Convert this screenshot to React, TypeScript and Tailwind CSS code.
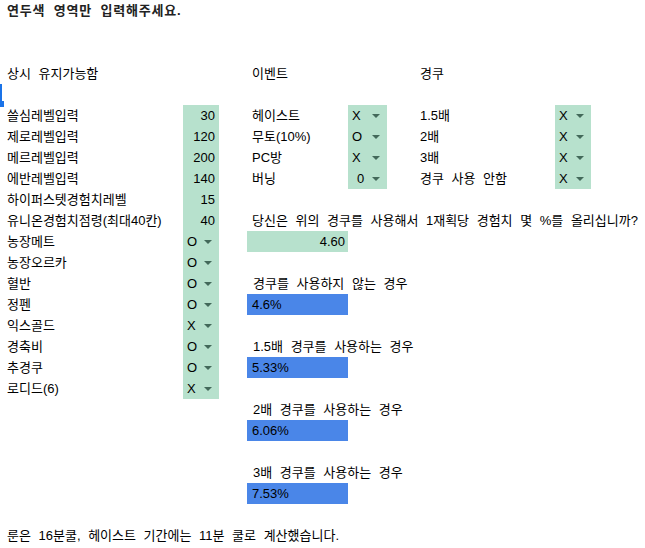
import type { ReactNode } from 'react';

const COLS = 'grid grid-cols-[183px_36px_28px_101px_39px_29px_139px_36px_1fr] h-[21px]';

const leftRows: [string, string, 'num' | 'dd'][] = [
  ['쓸심레벨입력', '30', 'num'],
  ['제로레벨입력', '120', 'num'],
  ['메르레벨입력', '200', 'num'],
  ['에반레벨입력', '140', 'num'],
  ['하이퍼스텟경험치레벨', '15', 'num'],
  ['유니온경험치점령(최대40칸)', '40', 'num'],
  ['농장메트', 'O', 'dd'],
  ['농장오르카', 'O', 'dd'],
  ['혈반', 'O', 'dd'],
  ['정펜', 'O', 'dd'],
  ['익스골드', 'X', 'dd'],
  ['경축비', 'O', 'dd'],
  ['추경쿠', 'O', 'dd'],
  ['로디드(6)', 'X', 'dd'],
];

const events: [string, string][] = [
  ['헤이스트', 'X'],
  ['무토(10%)', 'O'],
  ['PC방', 'X'],
  ['버닝', '0'],
];

const coupons = ['1.5배', '2배', '3배', '경쿠 사용 안함'];

const results: [string, string][] = [
  ['경쿠를 사용하지 않는 경우', '4.6%'],
  ['1.5배 경쿠를 사용하는 경우', '5.33%'],
  ['2배 경쿠를 사용하는 경우', '6.06%'],
  ['3배 경쿠를 사용하는 경우', '7.53%'],
];

function Row({ children }: { children?: ReactNode }) {
  return <div className={COLS}>{children}</div>;
}

function Text({ children, className = '' }: { children?: ReactNode; className?: string }) {
  return <div className={`flex items-center whitespace-nowrap ${className}`}>{children}</div>;
}

function Drop({ v, pad = 'pl-[4px]' }: { v: string; pad?: string }) {
  return (
    <div className={`flex items-center justify-between bg-[#b7e1cd] pr-[7px] ${pad}`}>
      <span>{v}</span>
      <span className="h-0 w-0 border-x-[4px] border-t-[4px] border-x-transparent border-t-[#43695a]" />
    </div>
  );
}

function Empty() {
  return <div />;
}

export default function App() {
  const rows: ReactNode[] = [];

  rows.push(
    <Row key="title">
      <Text className="col-span-9 pl-[7px] font-bold tracking-[0.8px] text-[#222]">연두색 영역만 입력해주세요.</Text>
    </Row>
  );
  rows.push(<Row key="e1" />, <Row key="e2" />);
  rows.push(
    <Row key="head">
      <Text className="pl-[7px]">상시 유지가능함</Text>
      <Empty />
      <Empty />
      <Text className="pl-[5px]">이벤트</Text>
      <Empty />
      <Empty />
      <Text className="pl-[4px]">경쿠</Text>
    </Row>
  );
  rows.push(<Row key="e4" />);

  leftRows.forEach(([label, value, type], i) => {
    const idx = i + 5;
    rows.push(
      <Row key={label}>
        <Text className="pl-[7px]">{label}</Text>
        {type === 'num' ? (
          <Text className="justify-end bg-[#b7e1cd] pr-[4px]">{value}</Text>
        ) : (
          <Drop v={value} />
        )}
        <Empty />
        {i < 4 && (
          <>
            <Text className="pl-[5px]">{events[i][0]}</Text>
            <Drop v={events[i][1]} pad={events[i][1] === '0' ? 'pl-[9px]' : 'pl-[4px]'} />
            <Empty />
            <Text className="pl-[4px]">{coupons[i]}</Text>
            <Drop v="X" />
          </>
        )}
        {idx === 10 && (
          <Text className="col-span-6 pl-[5px]">당신은 위의 경쿠를 사용해서 1재획당 경험치 몇 %를 올리십니까?</Text>
        )}
        {idx === 11 && <Text className="justify-end bg-[#b7e1cd] pr-[3px]">4.60</Text>}
        {[13, 16].includes(idx) && (
          <Text className="col-span-6 pl-[6px]">{results[(idx - 13) / 3][0]}</Text>
        )}
        {[14, 17].includes(idx) && (
          <Text className="bg-[#4a86e8] pl-[5px]">{results[(idx - 14) / 3][1]}</Text>
        )}
      </Row>
    );
  });

  for (let idx = 19; idx <= 24; idx++) {
    rows.push(
      <Row key={`r${idx}`}>
        <Empty />
        <Empty />
        <Empty />
        {(idx === 19 || idx === 22) && (
          <Text className="col-span-6 pl-[6px]">{results[(idx - 13) / 3][0]}</Text>
        )}
        {(idx === 20 || idx === 23) && (
          <Text className="bg-[#4a86e8] pl-[5px]">{results[(idx - 14) / 3][1]}</Text>
        )}
      </Row>
    );
  }

  rows.push(
    <Row key="foot">
      <Text className="col-span-9 pl-[7px]">룬은 16분쿨, 헤이스트 기간에는 11분 쿨로 계산했습니다.</Text>
    </Row>
  );

  return (
    <div className="relative h-[548px] w-[645px] overflow-hidden bg-white font-['Liberation_Sans','Noto_Sans_CJK_KR',sans-serif] text-[13px] text-black [word-spacing:4px]">
      {rows}
      {/* selected cell edge */}
      <div className="absolute left-0 top-[84px] h-[20px] w-[2px] bg-[#1a73e8]" />
      <div className="absolute left-0 top-[101px] h-[6px] w-[4px] bg-[#1a73e8]" />
    </div>
  );
}
